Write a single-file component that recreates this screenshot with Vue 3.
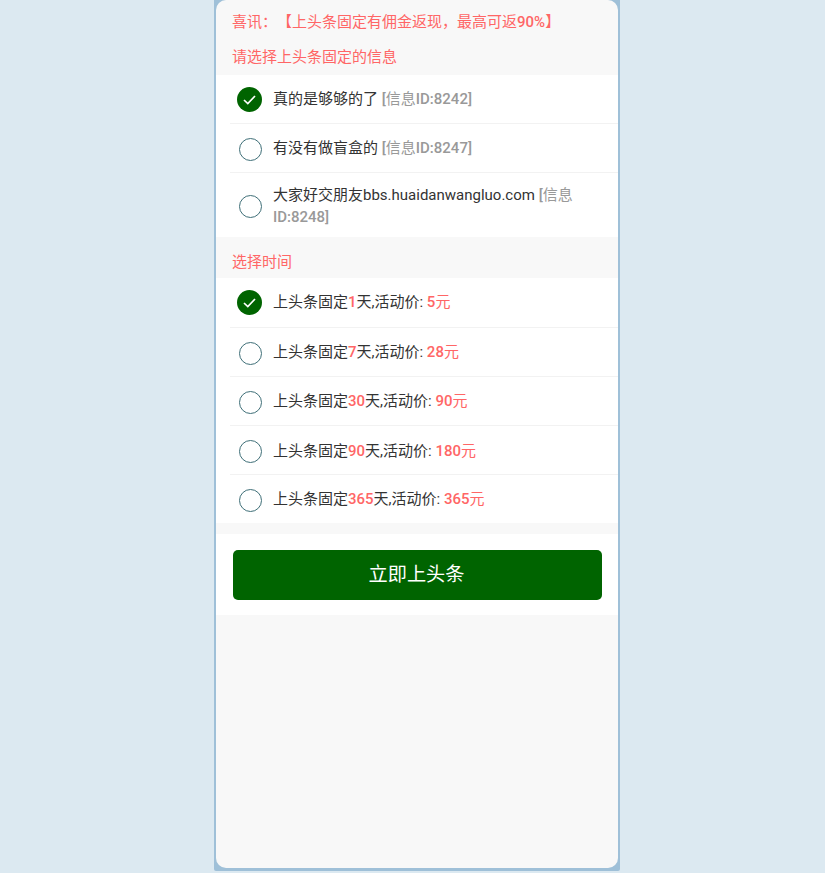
<template>
  <div class="page">
    <div class="panel">
      <div class="notice">喜讯：【上头条固定有佣金返现，最高可返<b>90%</b>】</div>
      <div class="section-title first">请选择上头条固定的信息</div>
      <div class="list">
        <div
          v-for="post in posts"
          :key="post.id"
          class="row"
          :class="{ tall: post.tall }"
          @click="postId = post.id"
        >
          <span class="radio" :class="{ checked: postId === post.id }">
            <svg v-if="postId === post.id" viewBox="0 0 25 25" width="25" height="25">
              <path d="M7 13l3.8 3.6 7.2-7.6" fill="none" stroke="#fff" stroke-width="1.7" />
            </svg>
          </span>
          <span class="label">
            {{ post.title }} <span class="meta">[<span class="cjk">信息</span>ID:{{ post.id }}]</span>
          </span>
        </div>
      </div>
      <div class="section-title second">选择时间</div>
      <div class="list plans">
        <div
          v-for="plan in plans"
          :key="plan.days"
          class="row"
          @click="days = plan.days"
        >
          <span class="radio" :class="{ checked: days === plan.days }">
            <svg v-if="days === plan.days" viewBox="0 0 25 25" width="25" height="25">
              <path d="M7 13l3.8 3.6 7.2-7.6" fill="none" stroke="#fff" stroke-width="1.7" />
            </svg>
          </span>
          <span class="label">
            上头条固定<b class="red">{{ plan.days }}</b>天,活动价: <b class="red">{{ plan.price }}</b><span class="red">元</span>
          </span>
        </div>
      </div>
      <div class="submit-bar">
        <button class="submit" type="button">立即上头条</button>
      </div>
    </div>
  </div>
</template>

<script setup>
import { ref } from 'vue'

const posts = [
  { id: 8242, title: '真的是够够的了' },
  { id: 8247, title: '有没有做盲盒的' },
  { id: 8248, title: '大家好交朋友bbs.huaidanwangluo.com', tall: true }
]

const plans = [
  { days: 1, price: 5 },
  { days: 7, price: 28 },
  { days: 30, price: 90 },
  { days: 90, price: 180 },
  { days: 365, price: 365 }
]

const postId = ref(8242)
const days = ref(1)
</script>

<style scoped>
.page {
  height: 873px;
  background: #dce9f1;
  overflow: hidden;
  font-family: Roboto, "Noto Sans CJK SC", sans-serif;
  font-size: 15px;
  color: #333;
  text-spacing-trim: space-all;
}

.panel {
  box-sizing: border-box;
  width: 406px;
  height: 871px;
  margin: 0 auto 0 214px;
  padding: 0 2px 3px;
  background: #9fc0d8;
  border-radius: 0 0 2px 2px;
  display: flex;
  flex-direction: column;
  position: relative;
}

.panel::before {
  content: "";
  position: absolute;
  inset: 0 2px 3px;
  background: #f8f8f8;
  border-radius: 10px;
}

.panel > * {
  position: relative;
}

.notice {
  height: 44px;
  line-height: 44px;
  padding-left: 16px;
  color: #ff6666;
  white-space: nowrap;
}

.notice b {
  font-weight: 500;
}

.section-title {
  padding-left: 16px;
  color: #ff6666;
}

.section-title.first {
  height: 31px;
  line-height: 27px;
}

.section-title.second {
  height: 41px;
  line-height: 50px;
}

.list {
  background: #fff;
}

.row {
  box-sizing: border-box;
  display: flex;
  align-items: center;
  height: 49px;
  margin-left: 14px;
  border-top: 1px solid #f2f2f2;
  cursor: pointer;
}

.row:first-child {
  height: 48px;
  border-top: 0;
}

.plans .row:first-child {
  height: 49px;
}

.plans .row:first-child .label {
  padding-bottom: 2px;
}

.plans .row:nth-child(4) .label {
  padding-top: 2px;
}

.row.tall {
  height: 65px;
}

.row.tall .label {
  padding-top: 2px;
}

.radio {
  box-sizing: border-box;
  flex: none;
  width: 23px;
  height: 23px;
  margin: 2px 11px 0 9px;
  border: 1px solid #3f6f78;
  border-radius: 50%;
}

.radio.checked {
  width: 25px;
  height: 25px;
  margin: 0 11px 0 7px;
  border: 0;
  background: #006400;
}

.radio svg {
  display: block;
}

.label {
  line-height: 22px;
  padding-right: 28px;
}

.meta {
  color: #999;
  font-weight: 500;
}

.meta .cjk {
  font-weight: 400;
}

.red {
  color: #ff6666;
}

b.red {
  font-weight: 500;
}

.submit-bar {
  margin-top: 11px;
  padding: 16px 16px 15px 17px;
  background: #fff;
}

.submit {
  display: block;
  width: 100%;
  height: 50px;
  padding: 0 2px 5px 0;
  border: 0;
  border-radius: 5px;
  background: #006400;
  color: #fff;
  font-family: inherit;
  font-size: 19.2px;
  cursor: pointer;
}
</style>

<style>
body {
  background: #dce9f1;
}
</style>
